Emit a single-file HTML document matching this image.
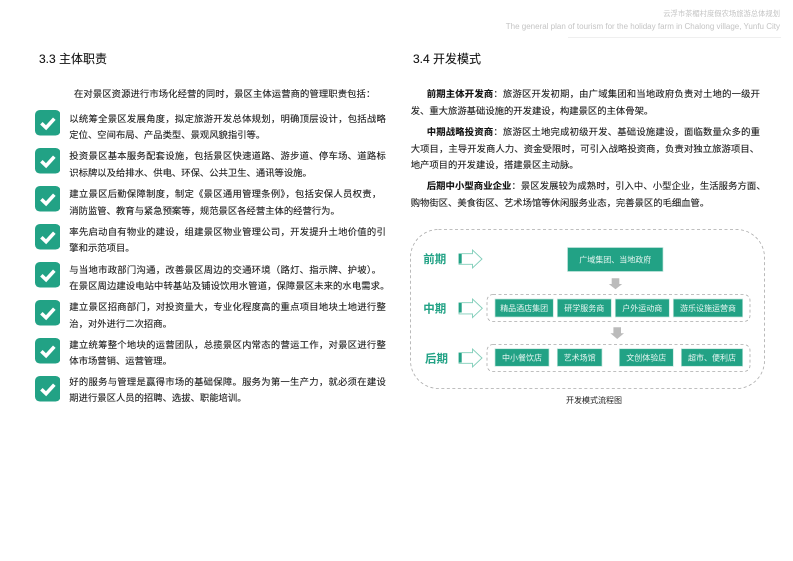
<!DOCTYPE html>
<html lang="zh">
<head>
<meta charset="utf-8">
<style>
html,body{margin:0;padding:0;background:#fff}
#p{position:relative;width:793px;height:561px;overflow:hidden;background:#fff;font-family:"Liberation Sans","Noto Sans CJK SC",sans-serif;color:#333;filter:blur(.25px)}
.l{position:absolute;white-space:nowrap;font-size:9.33px;line-height:16px;height:16px;color:#222;margin-top:.3px;-webkit-text-stroke:.12px #222}
.j{letter-spacing:.27px}
.k{letter-spacing:.2px}
.m{letter-spacing:.09px}
.h{position:absolute;white-space:nowrap;font-size:12px;line-height:18px;color:#111;-webkit-text-stroke:.1px #111}
.c{position:absolute;left:34.5px;width:25.5px;height:25.5px}
b{font-weight:700;color:#111}
i{font-family:"Noto Sans CJK TC",sans-serif;font-style:normal}
</style>
</head>
<body>
<div id="p">
<div style="position:absolute;right:13px;top:8px;font-size:7.3px;line-height:11px;color:#c4c4c4;white-space:nowrap">云浮市茶楣村度假农场旅游总体规划</div>
<div style="position:absolute;right:13px;top:20.5px;font-size:8px;line-height:11px;color:#c4c4c4;white-space:nowrap">The general plan of tourism for the holiday farm in Chalong village, Yunfu City</div>
<div style="position:absolute;left:568px;top:37px;width:213px;height:1px;background:#efefef"></div>

<div class="h" style="left:39px;top:50px">3.3 主体职责</div>
<div class="h" style="left:413px;top:50px">3.4 开发模式</div>

<div class="l m" style="left:74px;top:85px">在对景区资源进行市场化经营的同时<i>，</i>景区主体运营商的管理职责包括<i>：</i></div>

<svg class="c" style="top:110px" viewBox="0 0 26 26"><rect width="26" height="26" rx="5" fill="#22a285"/><path d="M6.5 13.5l4.8 4.6 8.4-9.2" fill="none" stroke="#fff" stroke-width="3.6"/></svg>
<svg class="c" style="top:148px" viewBox="0 0 26 26"><rect width="26" height="26" rx="5" fill="#22a285"/><path d="M6.5 13.5l4.8 4.6 8.4-9.2" fill="none" stroke="#fff" stroke-width="3.6"/></svg>
<svg class="c" style="top:186px" viewBox="0 0 26 26"><rect width="26" height="26" rx="5" fill="#22a285"/><path d="M6.5 13.5l4.8 4.6 8.4-9.2" fill="none" stroke="#fff" stroke-width="3.6"/></svg>
<svg class="c" style="top:224px" viewBox="0 0 26 26"><rect width="26" height="26" rx="5" fill="#22a285"/><path d="M6.5 13.5l4.8 4.6 8.4-9.2" fill="none" stroke="#fff" stroke-width="3.6"/></svg>
<svg class="c" style="top:262px" viewBox="0 0 26 26"><rect width="26" height="26" rx="5" fill="#22a285"/><path d="M6.5 13.5l4.8 4.6 8.4-9.2" fill="none" stroke="#fff" stroke-width="3.6"/></svg>
<svg class="c" style="top:300px" viewBox="0 0 26 26"><rect width="26" height="26" rx="5" fill="#22a285"/><path d="M6.5 13.5l4.8 4.6 8.4-9.2" fill="none" stroke="#fff" stroke-width="3.6"/></svg>
<svg class="c" style="top:338px" viewBox="0 0 26 26"><rect width="26" height="26" rx="5" fill="#22a285"/><path d="M6.5 13.5l4.8 4.6 8.4-9.2" fill="none" stroke="#fff" stroke-width="3.6"/></svg>
<svg class="c" style="top:376px" viewBox="0 0 26 26"><rect width="26" height="26" rx="5" fill="#22a285"/><path d="M6.5 13.5l4.8 4.6 8.4-9.2" fill="none" stroke="#fff" stroke-width="3.6"/></svg>

<div class="l j" style="left:69.3px;top:109.3px">以统筹全景区发展角度<i>，</i>拟定旅游开发总体规划<i>，</i>明确顶层设计<i>，</i>包括战略</div>
<div class="l" style="left:69.3px;top:126.3px">定位、空间布局、产品类型、景观风貌指引等。</div>
<div class="l j" style="left:69.3px;top:147px">投资景区基本服务配套设施<i>，</i>包括景区快速道路、游步道、停车场、道路标</div>
<div class="l" style="left:69.3px;top:164.3px">识标牌以及给排水、供电、环保、公共卫生、通讯等设施。</div>
<div class="l j" style="left:69.3px;top:184.7px">建立景区后勤保障制度<i>，</i>制定《景区通用管理条例》<i>，</i>包括安保人员权责<i>，</i></div>
<div class="l" style="left:69.3px;top:201.7px">消防监管、教育与紧急预案等<i>，</i>规范景区各经营主体的经营行为。</div>
<div class="l j" style="left:69.3px;top:222.3px">率先启动自有物业的建设<i>，</i>组建景区物业管理公司<i>，</i>开发提升土地价值的引</div>
<div class="l" style="left:69.3px;top:239.7px">擎和示范项目。</div>
<div class="l j" style="left:69.3px;top:260.3px">与当地市政部门沟通<i>，</i>改善景区周边的交通环境（路灯、指示牌、护坡）。</div>
<div class="l m" style="left:69.3px;top:277px">在景区周边建设电站中转基站及铺设饮用水管道<i>，</i>保障景区未来的水电需求。</div>
<div class="l j" style="left:69.3px;top:297.7px">建立景区招商部门<i>，</i>对投资量大<i>，</i>专业化程度高的重点项目地块土地进行整</div>
<div class="l" style="left:69.3px;top:314.7px">治<i>，</i>对外进行二次招商。</div>
<div class="l j" style="left:69.3px;top:335.3px">建立统筹整个地块的运营团队<i>，</i>总揽景区内常态的营运工作<i>，</i>对景区进行整</div>
<div class="l" style="left:69.3px;top:352.3px">体市场营销、运营管理。</div>
<div class="l j" style="left:69.3px;top:372.7px">好的服务与管理是赢得市场的基础保障。服务为第一生产力<i>，</i>就必须在建设</div>
<div class="l" style="left:69.3px;top:389.7px">期进行景区人员的招聘、选拔、职能培训。</div>

<div class="l k" style="left:426.7px;top:85px"><b>前期主体开发商</b><i>：</i>旅游区开发初期<i>，</i>由广域集团和当地政府负责对土地的一级开</div>
<div class="l" style="left:410.7px;top:102px">发、重大旅游基础设施的开发建设<i>，</i>构建景区的主体骨架。</div>
<div class="l k" style="left:426.7px;top:122.7px"><b>中期战略投资商</b><i>：</i>旅游区土地完成初级开发、基础设施建设<i>，</i>面临数量众多的重</div>
<div class="l m" style="left:410.7px;top:139.7px">大项目<i>，</i>主导开发商人力、资金受限时<i>，</i>可引入战略投资商<i>，</i>负责对独立旅游项目、</div>
<div class="l" style="left:410.7px;top:156px">地产项目的开发建设<i>，</i>搭建景区主动脉。</div>
<div class="l m" style="left:426.7px;top:176.7px"><b>后期中小型商业企业</b><i>：</i>景区发展较为成熟时<i>，</i>引入中、小型企业<i>，</i>生活服务方面、</div>
<div class="l" style="left:410.7px;top:193.7px">购物街区、美食街区、艺术场馆等休闲服务业态<i>，</i>完善景区的毛细血管。</div>

<svg style="position:absolute;left:0;top:0" width="793" height="561" viewBox="0 0 793 561">
<rect x="410.5" y="229.5" width="354" height="159" rx="28" fill="none" stroke="#aaa" stroke-width=".8" stroke-dasharray="3 2.5"/>
<rect x="487" y="294.5" width="263" height="27" rx="6" fill="none" stroke="#aaa" stroke-width=".8" stroke-dasharray="3 2.5"/>
<rect x="487" y="344.5" width="263" height="27" rx="6" fill="none" stroke="#aaa" stroke-width=".8" stroke-dasharray="3 2.5"/>
<g fill="#22a285" stroke="#c4e6dd" stroke-width=".7">
<rect x="567.5" y="247.5" width="95.5" height="24"/>
<rect x="495" y="299" width="58.3" height="18"/>
<rect x="557.3" y="299" width="54" height="18"/>
<rect x="615.3" y="299" width="54" height="18"/>
<rect x="673.3" y="299" width="69.4" height="18"/>
<rect x="495" y="348.7" width="54" height="17.6"/>
<rect x="557.3" y="348.7" width="44.7" height="17.6"/>
<rect x="619.3" y="348.7" width="54" height="17.6"/>
<rect x="681.3" y="348.7" width="61.4" height="17.6"/>
</g>
<g font-family="'Liberation Sans','Noto Sans CJK SC',sans-serif" font-size="8" fill="#e8f6f2" text-anchor="middle">
<text x="615.3" y="262.5">广域集团、当地政府</text>
<text x="524.2" y="311">精品酒店集团</text>
<text x="584.3" y="311">研学服务商</text>
<text x="642.3" y="311">户外运动商</text>
<text x="708" y="311">游乐设施运营商</text>
<text x="522" y="360.5">中小餐饮店</text>
<text x="579.6" y="360.5">艺术场馆</text>
<text x="646.3" y="360.5">文创体验店</text>
<text x="712" y="360.5">超市、便利店</text>
</g>
<g font-family="'Liberation Sans','Noto Sans CJK SC',sans-serif" font-size="11.5" font-weight="700" fill="#22a285">
<text x="423.3" y="263">前期</text>
<text x="423.3" y="312.5">中期</text>
<text x="425" y="362.5">后期</text>
</g>
<g fill="#fff" stroke="#7fcdb9" stroke-width=".9">
<path d="M459 253.7h13.5v-3.7l9.5 9-9.5 9v-3.7H459z"/>
<path d="M459 302.7h13.5v-3.7l9.8 9.3-9.8 9.3v-3.7H459z"/>
<path d="M459 352.7h13.5v-3.7l9.5 9-9.5 9v-3.7H459z"/>
</g>
<g fill="#22a285">
<rect x="458.7" y="254" width="3" height="9.5"/>
<rect x="458.7" y="303" width="3" height="9.5"/>
<rect x="458.7" y="353" width="3" height="9.5"/>
</g>
<g fill="#bbb">
<path d="M611.7 278.2h7.6v5.8h2.9l-6.7 5.3-6.7-5.3h2.9z"/>
<path d="M613.4 327.3h7.6v6h3l-6.8 5.7-6.8-5.7h3z"/>
</g>
<text x="594" y="403" font-family="'Liberation Sans','Noto Sans CJK SC',sans-serif" font-size="8" fill="#222" text-anchor="middle">开发模式流程图</text>
</svg>
</div>
</body>
</html>
